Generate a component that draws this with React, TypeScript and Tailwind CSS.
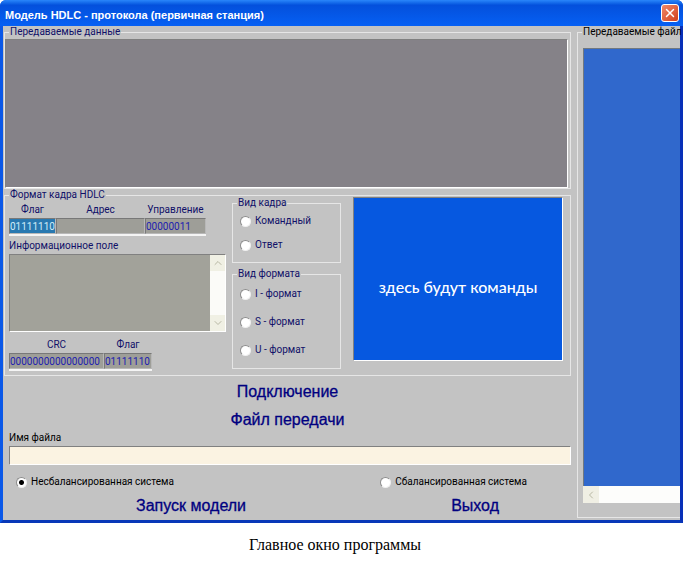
import type { ReactNode } from "react";
import clsx from "clsx";
import { ChevronDown, ChevronLeft, ChevronUp, X } from "lucide-react";

const sunken = "border border-t-[#808080] border-l-[#808080] border-r-white border-b-white";

function Group({
  title,
  className,
  children,
}: {
  title: string;
  className?: string;
  children: ReactNode;
}) {
  return (
    <fieldset className={clsx("min-w-0 border border-[#e6e6e6]", className)}>
      <legend className="ml-1 px-px">{title}</legend>
      {children}
    </fieldset>
  );
}

function Radio({
  name,
  label,
  checked,
}: {
  name: string;
  label: string;
  checked?: boolean;
}) {
  return (
    <label className="flex h-3 items-center gap-1 whitespace-nowrap">
      <input
        type="radio"
        name={name}
        defaultChecked={checked}
        className="size-[11px] shrink-0 appearance-none rounded-full border border-t-[#8c8c8c] border-l-[#8c8c8c] border-r-[#f0f0f0] border-b-[#f0f0f0] bg-white checked:bg-[radial-gradient(circle,#000_2px,#fff_3px)]"
      />
      {label}
    </label>
  );
}

function Field({
  label,
  value,
  className,
  selected,
}: {
  label: string;
  value: string;
  className?: string;
  selected?: boolean;
}) {
  return (
    <label className={clsx("flex flex-col gap-0.5 text-center", className)}>
      {label}
      <span className="block h-[18px] border-b-2 border-[#f4f4f4]">
        <input
          defaultValue={value}
          className={clsx(
            "block h-4 w-full border border-t-[#787878] border-l-[#787878] border-r-[#b8b8b8] border-b-[#b8b8b8]",
            selected ? "bg-[#2878b0] text-[#d0ecf8]" : "bg-[#9e9e98] text-[#2020b0]",
          )}
        />
      </span>
    </label>
  );
}

function Action({ children }: { children: ReactNode }) {
  return (
    <button type="button" className="h-5 font-['Liberation_Sans',sans-serif] text-base leading-5 text-[#000080] [-webkit-text-stroke:0.3px_#000080]">
      {children}
    </button>
  );
}

export default function App() {
  return (
    <div className="min-h-screen bg-white font-[Roboto,sans-serif] text-[10px] leading-3 text-black">
      <main className="mr-px flex flex-col rounded-t-md bg-[#0a50dc]">
        <header className="flex h-[26px] items-center justify-between rounded-t-md bg-linear-to-b from-[#2a86fa] via-[#0450dc] via-20% to-[#0660f4] pr-1 pl-[5px]">
          <h1 className="pt-1 font-['Liberation_Sans',sans-serif] text-[11px] font-bold whitespace-nowrap text-white">
            Модель HDLC - протокола (первичная станция)
          </h1>
          <button
            type="button"
            aria-label="Закрыть"
            className="flex size-[18px] items-center justify-center rounded-[3px] border border-white bg-linear-to-br from-[#f08868] to-[#d03c14] text-white"
          >
            <X size={14} strokeWidth={2.5} />
          </button>
        </header>

        <div className="flex border-x-3 border-b-3 border-l-[#0a58e8] border-r-[#0830b8] border-b-[#0838b8] bg-[#c3c3c3] pl-px">
          <div className="flex min-w-0 flex-1 flex-col text-[#101068]">
            <Group title="Передаваемые данные" className="pt-px pr-0.5">
              <textarea
                aria-label="Передаваемые данные"
                className={clsx("block h-[149px] w-full resize-none bg-[#858288]", sunken)}
              />
            </Group>

            <Group title="Формат кадра HDLC" className="pb-1">
              <div className="-mt-1 flex pr-[7px] pl-1">
                <div className="w-[217px] shrink-0 pt-[7px]">
                  <div className="flex pr-5">
                    <Field label="Флаг" value="01111110" className="w-[47px]" selected />
                    <Field label="Адрес" value="" className="flex-1" />
                    <Field label="Управление" value="00000011" className="w-[61px]" />
                  </div>
                  <label htmlFor="info" className="mt-1 mb-0.5 block">
                    Информационное поле
                  </label>
                  <div className={clsx("flex h-[78px]", sunken)}>
                    <textarea id="info" className="min-w-0 flex-1 resize-none bg-[#a2a29a]" />
                    <div className="flex w-[15px] flex-col justify-between bg-[#fbfbf8] text-[#b8b8a4]">
                      <button type="button" aria-label="Вверх" className="flex h-4 items-center justify-center bg-[#f0f0e4]">
                        <ChevronUp size={12} />
                      </button>
                      <button type="button" aria-label="Вниз" className="flex h-4 items-center justify-center bg-[#f0f0e4]">
                        <ChevronDown size={12} />
                      </button>
                    </div>
                  </div>
                  <div className="mt-[7px] flex">
                    <Field label="CRC" value="0000000000000000" className="w-[95px]" />
                    <Field label="Флаг" value="01111110" className="w-12" />
                  </div>
                </div>

                <div className="ml-1.5 flex w-[109px] shrink-0 flex-col gap-[5px]">
                  <Group title="Вид кадра" className="pb-[11px]">
                    <div className="flex flex-col gap-3 pt-1.5 pl-[7px]">
                      <Radio name="kind" label="Командный" />
                      <Radio name="kind" label="Ответ" />
                    </div>
                  </Group>
                  <Group title="Вид формата" className="pb-3">
                    <div className="flex flex-col gap-4 pt-2 pl-[7px]">
                      <Radio name="format" label="I - формат" />
                      <Radio name="format" label="S - формат" />
                      <Radio name="format" label="U - формат" />
                    </div>
                  </Group>
                </div>

                <div
                  className={clsx(
                    "ml-3 flex h-[164px] flex-1 items-center justify-center bg-[#0658e0] pt-4 font-['Comic_Sans_MS',Lato,sans-serif] text-base leading-6 font-medium whitespace-nowrap text-white",
                    sunken,
                  )}
                >
                  здесь будут команды
                </div>
              </div>
            </Group>

            <div className="flex flex-col items-center gap-2 pt-1.5">
              <Action>Подключение</Action>
              <Action>Файл передачи</Action>
            </div>

            <label className="mt-0.5 flex flex-col gap-0.5 pl-[5px] text-black">
              Имя файла
              <input className={clsx("h-[19px] w-full bg-[#fbf3e2] px-1", sunken)} />
            </label>

            <div className="mt-[11px] grid grid-cols-[21fr_11fr] pl-3 text-black">
              <Radio name="system" label="Несбалансированная система" checked />
              <Radio name="system" label="Сбалансированная система" />
            </div>

            <div className="mt-2 mb-1 flex justify-between pr-[72px] pl-[132px]">
              <Action>Запуск модели</Action>
              <Action>Выход</Action>
            </div>
          </div>

          <Group title="Передаваемые файл" className="mb-0.5 ml-1.5 w-[103px] border-r-0 whitespace-nowrap">
            <div className="flex h-full flex-col pt-2.5 pb-3.5 pl-[5px]">
              <div className="flex-1 border-t border-l border-[#707880] bg-[#3068cc]" />
              <div className="flex h-[17px] bg-[#fdfdfb]">
                <button type="button" aria-label="Влево" className="flex w-4 items-center justify-center bg-[#f0efe4] text-[#b8b8a4]">
                  <ChevronLeft size={12} />
                </button>
              </div>
            </div>
          </Group>
        </div>
      </main>
      <p className="mt-3 pr-[14px] text-center font-['Liberation_Serif',serif] text-base leading-5">
        Главное окно программы
      </p>
    </div>
  );
}
